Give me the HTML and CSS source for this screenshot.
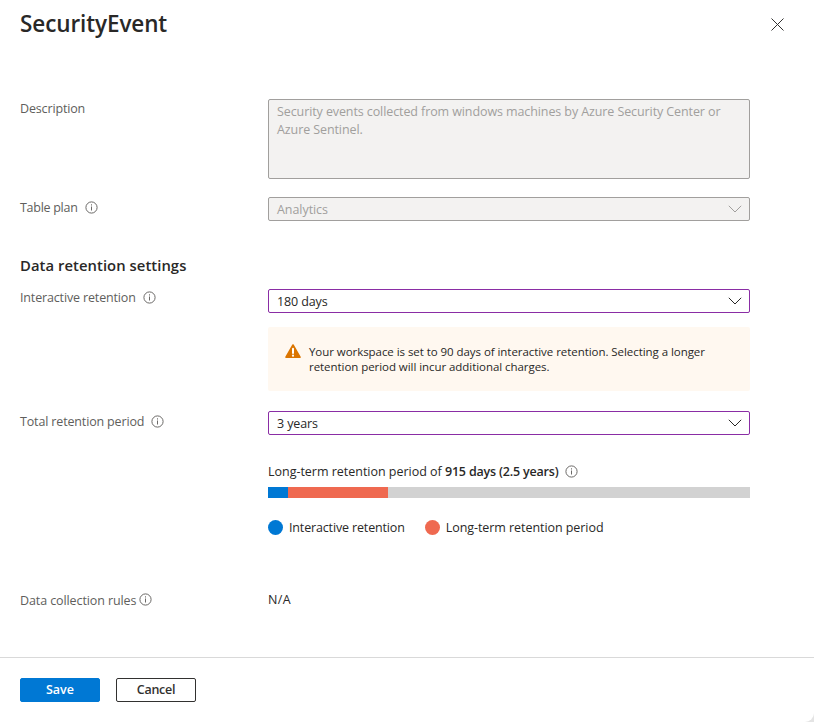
FILE: index.html
```html
<!DOCTYPE html>
<html lang="en">
<head>
<meta charset="utf-8">
<title>SecurityEvent</title>
<link rel="stylesheet" href="styles.css">
</head>
<body>
<svg class="defs" aria-hidden="true">
  <symbol id="info" viewBox="0 0 13 13">
    <circle cx="6.5" cy="6.5" r="5.6" fill="none" stroke="currentColor" stroke-width="1"/>
    <path d="M6.5 5.5v4M6.5 3.3v1.2" fill="none" stroke="currentColor" stroke-width="1"/>
  </symbol>
  <symbol id="chevron" viewBox="0 0 14 8">
    <path d="M.8.8 7 7 13.200.8" fill="none" stroke="currentColor" stroke-width="1"/>
  </symbol>
</svg>
<main class="panel">
  <header class="header">
    <h1 class="title">SecurityEvent</h1>
    <button class="close" aria-label="Close"><svg width="13" height="13" viewBox="0 0 13 13"><path d="M.5.5l12 12M12.500.5l-12 12" fill="none" stroke="currentColor" stroke-width="1"/></svg></button>
  </header>

  <section class="form">
    <div class="row row-description">
      <div class="label">Description</div>
      <div class="textarea">Security events collected from windows machines by Azure Security Center or Azure Sentinel.</div>
    </div>
    <div class="row row-plan">
      <div class="label"><span class="t-plan">Table plan</span><svg class="info"><use href="#info"/></svg></div>
      <div class="select disabled"><span>Analytics</span><svg class="chevron"><use href="#chevron"/></svg></div>
    </div>
    <h2 class="subtitle">Data retention settings</h2>
    <div class="row row-interactive">
      <div class="label"><span>Interactive retention</span><svg class="info"><use href="#info"/></svg></div>
      <div class="field">
        <div class="select"><span>180 days</span><svg class="chevron"><use href="#chevron"/></svg></div>
        <div class="alert">
          <svg class="warning" width="16" height="15" viewBox="0 0 16 15">
            <path d="M8 1 15 13.200H1z" fill="#db7500" stroke="#db7500" stroke-width="1.600" stroke-linejoin="round"/>
            <path d="M8 4.800v4.200" stroke="#fff" stroke-width="2" stroke-linecap="round"/>
            <circle cx="8" cy="11.700" r="1.100" fill="#fff"/>
          </svg>
          <p>Your workspace is set to 90 days of interactive retention. Selecting a longer<br>retention period will incur additional charges.</p>
        </div>
      </div>
    </div>
    <div class="row row-total">
      <div class="label"><span>Total retention period</span><svg class="info"><use href="#info"/></svg></div>
      <div class="field">
        <div class="select"><span>3 years</span><svg class="chevron"><use href="#chevron"/></svg></div>
        <div class="summary"><span><span class="lead">Long-term retention period of </span><b>915 days (2.5 years)</b></span><svg class="info"><use href="#info"/></svg></div>
        <div class="bar"><i class="bar-interactive"></i><i class="bar-long"></i></div>
        <div class="legend">
          <span class="key"><i class="dot blue"></i><span>Interactive retention</span></span>
          <span class="key"><i class="dot coral"></i><span class="t-long">Long-term retention period</span></span>
        </div>
      </div>
    </div>
    <div class="row row-rules">
      <div class="label tight"><span>Data collection rules</span><svg class="info"><use href="#info"/></svg></div>
      <div class="value">N/A</div>
    </div>
  </section>

  <footer class="footer">
    <button class="btn primary">Save</button>
    <button class="btn">Cancel</button>
  </footer>
</main>
</body>
</html>
```
FILE: styles.css
```css
* { box-sizing: border-box; }
body {
  margin: 0;
  background: #e4e4e4;
  color: #292827;
  font: 12.5px/18px "Open Sans", "Noto Sans", sans-serif;
  letter-spacing: -0.13px;
}
.defs { position: absolute; width: 0; height: 0; }
.panel {
  display: flex;
  flex-direction: column;
  height: 722px;
  background: #fff;
  border-bottom-right-radius: 9px;
  overflow: hidden;
}
.header {
  display: flex;
  justify-content: space-between;
  align-items: flex-start;
  height: 99px;
  padding: 8px 30px 0 20px;
}
.title {
  margin: 0;
  font-size: 22.5px;
  line-height: 32px;
  font-weight: 600;
  letter-spacing: -0.1px;
}
.close {
  display: flex;
  margin: 10px 0 0;
  padding: 0;
  border: 0;
  background: none;
  color: #323130;
}
.form { padding: 0 20px; height: 558px; }
.row { display: grid; grid-template-columns: 248px 482px; align-items: start; }
.label {
  display: flex;
  align-items: center;
  gap: 7px;
  padding-top: 1px;
  color: #605e5c;
  letter-spacing: -0.15px;
}
.info { width: 13px; height: 13px; flex: none; color: #6b6967; }
.label .info { margin-bottom: 1px; }
.t-plan { letter-spacing: -0.28px; }
.textarea {
  height: 80px;
  padding: 3px 8px;
  border: 1px solid #a19f9d;
  border-radius: 2px;
  background: #f3f2f1;
  color: #a19f9d;
  letter-spacing: -0.097px;
}
.row-plan { margin-top: 18px; }
.row-plan .label { margin-top: 1px; }
.select {
  display: flex;
  justify-content: space-between;
  align-items: center;
  height: 24px;
  padding: 0 8px;
  border: 1px solid #8a2da5;
  border-radius: 2px;
  background: #fff;
}
.select span { padding-top: 2px; }
.select.disabled { border-color: #a19f9d; background: #f3f2f1; color: #a19f9d; letter-spacing: -0.06px; }
.chevron { width: 14px; height: 8px; margin-right: -1px; }
.subtitle {
  margin: 33px 0 0;
  font-size: 14.8px;
  line-height: 22px;
  font-weight: 600;
  letter-spacing: 0.06px;
}
.row-interactive { margin-top: 13px; }
.row-interactive .label { margin-top: -1px; }
.alert {
  display: flex;
  gap: 8px;
  height: 64px;
  margin-top: 14px;
  padding: 17px 17px 0;
  border-radius: 2px;
  background: #fff8f0;
}
.alert p { margin: 0; font-size: 11.5px; line-height: 15px; letter-spacing: -0.055px; white-space: nowrap; }
.row-total { margin-top: 20px; }
.row-total .label { margin-top: 1px; }
.summary { display: flex; align-items: center; gap: 7px; margin-top: 28px; }
.summary .lead { letter-spacing: -0.02px; }
.summary b { font-weight: 600; letter-spacing: -0.19px; }
.summary .info { margin-bottom: 2px; }
.bar { display: flex; height: 11px; margin-top: 6px; background: #d2d2d2; }
.bar-interactive { width: 20px; background: #0078d4; }
.bar-long { width: 100px; background: #ef6950; }
.legend { display: flex; gap: 20px; margin-top: 21px; }
.key { display: flex; align-items: center; gap: 6px; letter-spacing: -0.15px; }
.t-long { letter-spacing: -0.06px; }
.dot { width: 15px; height: 15px; margin-bottom: 2px; border-radius: 50%; }
.blue { background: #0078d4; }
.coral { background: #ef6950; }
.row-rules { margin-top: 54px; }
.row-rules .label { margin-top: 0; }
.label.tight { gap: 3px; letter-spacing: -0.1px; }
.label.tight .info { margin-bottom: 3px; }
.value { letter-spacing: 0.36px; }
.footer {
  display: flex;
  flex: 1;
  gap: 16px;
  align-items: flex-start;
  padding: 20px 20px 0;
  border-top: 1px solid #d9d9d9;
}
.btn {
  width: 80px;
  height: 24px;
  padding: 0;
  border: 1px solid #323130;
  border-radius: 2px;
  background: #fff;
  color: #323130;
  font: 600 12.5px/20px "Open Sans", "Noto Sans", sans-serif;
  letter-spacing: -0.25px;
}
.btn.primary { border-color: #0078d4; background: #0078d4; color: #fff; letter-spacing: 0; }
```
